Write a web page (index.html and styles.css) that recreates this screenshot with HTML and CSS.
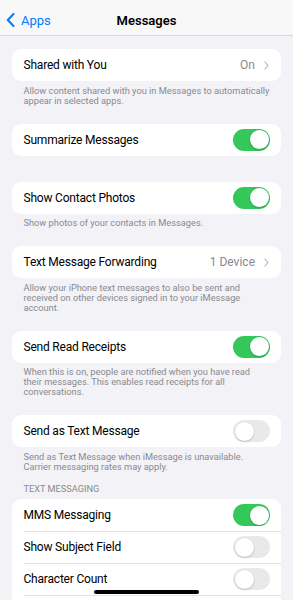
FILE: index.html
```html
<!DOCTYPE html>
<html lang="en">
<head>
<meta charset="utf-8">
<title>Messages</title>
<link rel="stylesheet" href="styles.css">
</head>
<body>
<header class="nav">
  <a class="back">
    <svg class="back-icon" viewBox="0 0 9 14" width="9" height="14"><path d="M7.5 1 L1.8 7 L7.5 13" fill="none" stroke="#007aff" stroke-width="2" stroke-linecap="round" stroke-linejoin="round"/></svg>
    <span>Apps</span>
  </a>
  <h1 class="title">Messages</h1>
</header>

<main class="content">
  <section class="group">
    <div class="card">
      <div class="row"><span class="label">Shared with You</span><span class="detail">On</span><svg class="chev" viewBox="0 0 5 9" width="5" height="9"><path d="M1 1 L4 4.5 L1 8" fill="none" stroke="#c4c4c7" stroke-width="1.3" stroke-linecap="round" stroke-linejoin="round"/></svg></div>
    </div>
    <p class="footer">Allow content shared with you in Messages to automatically appear in selected apps.</p>
  </section>

  <section class="group group-nofoot">
    <div class="card">
      <div class="row"><span class="label">Summarize Messages</span><span class="toggle on"><span class="knob"></span></span></div>
    </div>
  </section>

  <section class="group">
    <div class="card">
      <div class="row"><span class="label">Show Contact Photos</span><span class="toggle on"><span class="knob"></span></span></div>
    </div>
    <p class="footer">Show photos of your contacts in Messages.</p>
  </section>

  <section class="group">
    <div class="card">
      <div class="row"><span class="label">Text Message Forwarding</span><span class="detail">1 Device</span><svg class="chev" viewBox="0 0 5 9" width="5" height="9"><path d="M1 1 L4 4.5 L1 8" fill="none" stroke="#c4c4c7" stroke-width="1.3" stroke-linecap="round" stroke-linejoin="round"/></svg></div>
    </div>
    <p class="footer">Allow your iPhone text messages to also be sent and received on other devices signed in to your iMessage account.</p>
  </section>

  <section class="group">
    <div class="card">
      <div class="row"><span class="label">Send Read Receipts</span><span class="toggle on"><span class="knob"></span></span></div>
    </div>
    <p class="footer">When this is on, people are notified when you have read their messages. This enables read receipts for all conversations.</p>
  </section>

  <section class="group group-before-header">
    <div class="card">
      <div class="row"><span class="label">Send as Text Message</span><span class="toggle"><span class="knob"></span></span></div>
    </div>
    <p class="footer">Send as Text Message when iMessage is unavailable. Carrier messaging rates may apply.</p>
  </section>

  <section class="group">
    <h2 class="section-header">TEXT MESSAGING</h2>
    <div class="card">
      <div class="row"><span class="label">MMS Messaging</span><span class="toggle on"><span class="knob"></span></span></div>
      <div class="row"><span class="label">Show Subject Field</span><span class="toggle"><span class="knob"></span></span></div>
      <div class="row"><span class="label">Character Count</span><span class="toggle"><span class="knob"></span></span></div>
      <div class="row row-more"></div>
    </div>
  </section>
</main>

<div class="home-indicator"></div>
</body>
</html>
```

FILE: styles.css
```css
* { box-sizing: border-box; }

html, body {
  margin: 0;
  padding: 0;
  background: #f2f2f7;
  font-family: "Roboto", "Inter", "Liberation Sans", sans-serif;
  color: #000;
  -webkit-font-smoothing: antialiased;
}

body {
  width: 293px;
  min-height: 600px;
  overflow: hidden;
}

.nav {
  position: relative;
  height: 36px;
  padding-top: 5px;
  background: #f8f8f8;
  border-bottom: 1px solid #d9d9dc;
  display: flex;
  align-items: center;
  justify-content: center;
}

.back {
  position: absolute;
  left: 6px;
  top: 5px;
  bottom: 0;
  display: flex;
  align-items: center;
  gap: 6px;
  color: #007aff;
  font-size: 13px;
}

.back-icon { display: block; }

.title {
  margin: 0;
  font-size: 13px;
  font-weight: 600;
}

.content {
  padding: 13px 12px 0;
}

.group { margin-bottom: 18px; }
.group-nofoot { margin-bottom: 26px; }
.group-before-header { margin-bottom: 12.5px; }

.card {
  background: #fff;
  border-radius: 9px;
  overflow: hidden;
}

.row {
  height: 32px;
  display: flex;
  align-items: center;
  padding: 0 11px 0 11.5px;
  position: relative;
}

.row + .row::before {
  content: "";
  position: absolute;
  top: 0;
  left: 11.5px;
  right: 0;
  height: 1px;
  background: #e3e3e6;
}

.label {
  flex: 1;
  font-size: 12px;
  letter-spacing: -0.2px;
}

.detail {
  font-size: 12px;
  color: #8a8a8e;
  margin-right: 9px;
}

.chev { display: block; margin-right: 1px; }

.toggle {
  width: 37px;
  height: 22px;
  border-radius: 11px;
  background: #e9e9eb;
  position: relative;
  flex: none;
}

.toggle.on { background: #34c759; }

.knob {
  position: absolute;
  top: 1.5px;
  left: 1.5px;
  width: 19px;
  height: 19px;
  border-radius: 50%;
  background: #fff;
  box-shadow: 0 1px 2px rgba(0,0,0,0.18), 0 0 0 0.5px rgba(0,0,0,0.04);
}

.toggle.on .knob { left: 16.5px; }

.footer {
  margin: 0;
  padding: 4.5px 11px 0 11.5px;
  font-size: 9.25px;
  line-height: 10px;
  color: #8a8a8e;
}

.section-header {
  margin: 0;
  padding: 0 11.5px 5px;
  font-size: 9.2px;
  line-height: 10px;
  font-weight: 400;
  color: #8a8a8e;
}

.home-indicator {
  position: fixed;
  left: 94px;
  top: 590px;
  width: 105px;
  height: 4px;
  border-radius: 2px;
  background: #000;
}
```
